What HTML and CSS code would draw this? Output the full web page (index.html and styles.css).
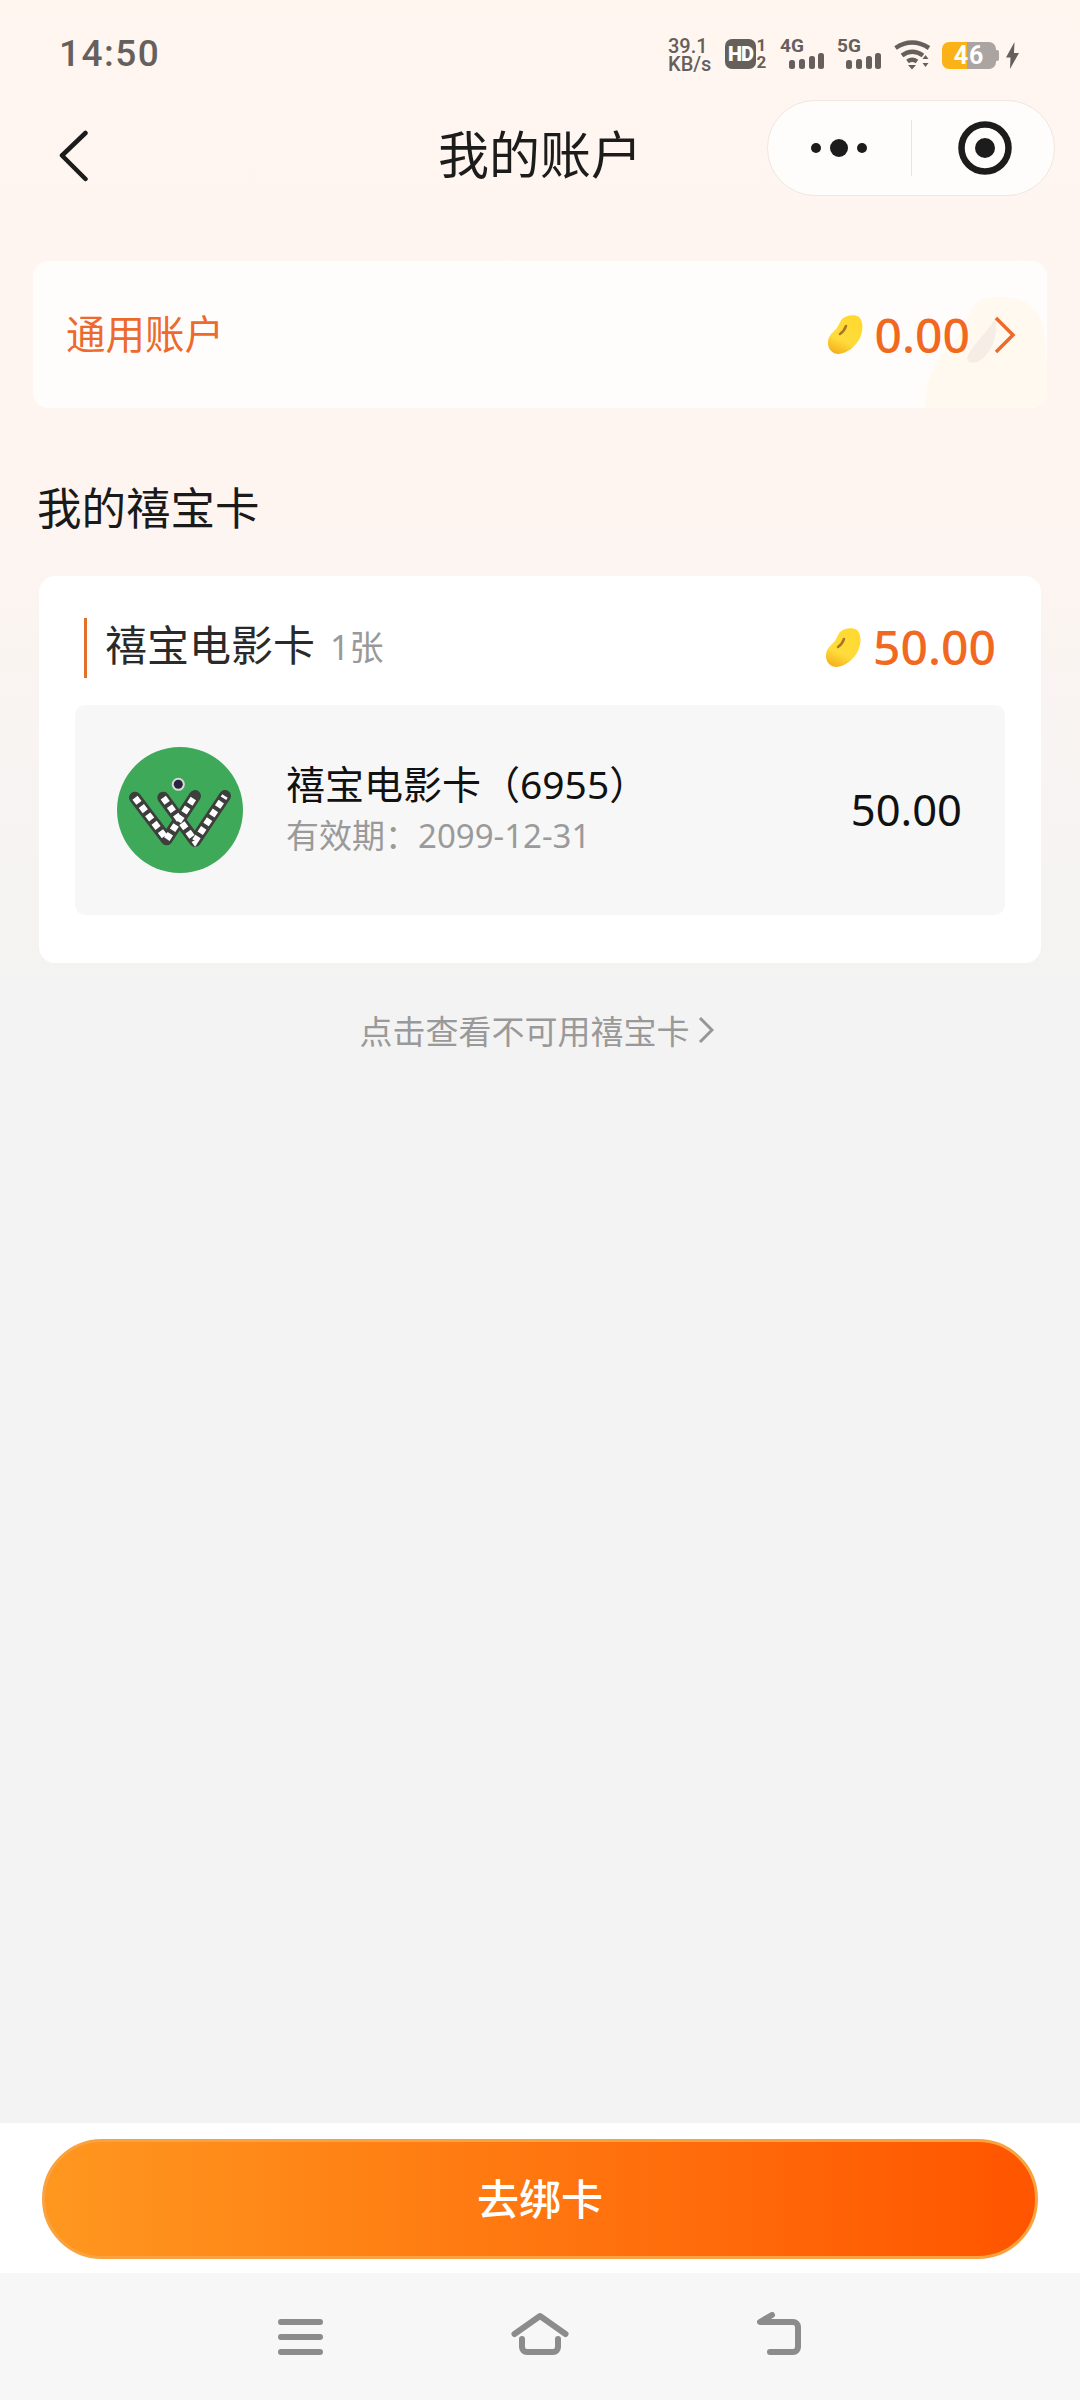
FILE: index.html
```html
<!DOCTYPE html>
<html lang="zh-CN">
<head>
    <meta charset="UTF-8">
    <meta name="viewport" content="width=device-width, initial-scale=1.0">
    <title>我的账户</title>
    <link rel="stylesheet" href="styles.css">
</head>
<body>
    <svg class="defs" width="0" height="0">
        <defs>
            <linearGradient id="beanFill" x1="0.7" y1="0" x2="0.3" y2="1">
                <stop offset="0" stop-color="#ffd92e"/>
                <stop offset="0.65" stop-color="#ffdc3c"/>
                <stop offset="1" stop-color="#f4b31c"/>
            </linearGradient>
            <symbol id="bean" viewBox="0 0 35 39">
                <path d="M14 4C18 0 27-1 31 2c5 5 4 14 1 21-4 8-12 15-21 16C4 39 0 34 0 28c0-6 3-9 6-12 4-3 5-8 8-12z" fill="url(#beanFill)"/>
                <path d="M18 11c-1 3-3 6-6 8" fill="none" stroke="#a8742c" stroke-width="2.500" stroke-linecap="round"/>
            </symbol>
        </defs>
    </svg>

    <div class="page">
        <div class="status-bar">
            <span class="time">14:50</span>
            <div class="status-icons">
                <div class="speed">39.1<br>KB/s</div>
                <div class="hd">
                    <span class="hd-badge">HD</span>
                    <div class="sim"><span>1</span><span>2</span></div>
                </div>
                <div class="signal">
                    <span class="net-label">4G</span>
                    <svg width="35" height="16" viewBox="0 0 35 16">
                        <rect x="0" y="7" width="6" height="9" rx="2.500"/>
                        <rect x="10" y="6" width="6" height="10" rx="2.500"/>
                        <rect x="20" y="3" width="6" height="13" rx="2.500"/>
                        <rect x="29" y="0" width="6" height="16" rx="2.500"/>
                    </svg>
                </div>
                <div class="signal">
                    <span class="net-label">5G</span>
                    <svg width="35" height="16" viewBox="0 0 35 16">
                        <rect x="0" y="7" width="6" height="9" rx="2.500"/>
                        <rect x="10" y="6" width="6" height="10" rx="2.500"/>
                        <rect x="20" y="3" width="6" height="13" rx="2.500"/>
                        <rect x="29" y="0" width="6" height="16" rx="2.500"/>
                    </svg>
                </div>
                <svg class="wifi" width="37" height="30" viewBox="0 0 37 30">
                    <path d="M1.500 8Q18-3 35 8M8 15.500Q18 8 29 15.500M13.500 21.500Q18 18 23 21.500" fill="none" stroke="#65605c" stroke-width="4.500"/>
                    <path d="M14 25h8l-4 4.500zM31.500 15l3 4h-6zM28.500 23h6l-3 4z" fill="#65605c"/>
                </svg>
                <div class="battery">46</div>
                <svg class="bolt" width="13" height="27" viewBox="0 0 13 27">
                    <path d="M8.500 0L0 15.500h4.500L4 27l9-16H8z" fill="#65605c"/>
                </svg>
            </div>
        </div>

        <div class="nav-bar">
            <svg class="back" width="29" height="52" viewBox="0 0 29 52">
                <path d="M26.500 3L3 25.500 26.500 49" fill="none" stroke="#1c1c1c" stroke-width="4.500" stroke-linecap="round" stroke-linejoin="round"/>
            </svg>
            <h1 class="nav-title">我的账户</h1>
            <div class="capsule">
                <div class="capsule-more">
                    <svg width="58" height="20" viewBox="0 0 58 20" fill="#1c1c1c">
                        <circle cx="5" cy="10" r="5"/>
                        <circle cx="28" cy="10" r="9"/>
                        <circle cx="51" cy="10" r="5"/>
                    </svg>
                </div>
                <div class="capsule-line"></div>
                <div class="capsule-close">
                    <svg width="54" height="54" viewBox="0 0 54 54">
                        <circle cx="27" cy="27" r="23.500" fill="none" stroke="#1c1c1c" stroke-width="6.500"/>
                        <circle cx="27" cy="27" r="10" fill="#1c1c1c"/>
                    </svg>
                </div>
            </div>
        </div>

        <main class="content">
            <div class="account-card">
                <svg class="account-deco" width="122" height="111" viewBox="0 0 122 111">
                    <path d="M55 3C75-5 105 0 115 20c8 20 7 60 7 75 0 10-6 16-16 16H0C0 85 8 65 25 50 40 35 42 12 55 3z" fill="#fff9ef"/>
                    <path d="M72 16C68 30 50 45 43 58c-3 7 3 9 9 7 10-5 16-15 18-25 1-8 2-16 2-24z" fill="#f6eee6"/>
                </svg>
                <span class="account-name">通用账户</span>
                <div class="account-value">
                    <svg class="bean" width="35" height="39"><use href="#bean"/></svg>
                    <span class="amount">0.00</span>
                    <svg class="account-arrow" width="22" height="38" viewBox="0 0 22 38">
                        <path d="M2 2L19 19 2 36" fill="none" stroke="#ec6a2c" stroke-width="3.500"/>
                    </svg>
                </div>
            </div>

            <h2 class="section-title">我的禧宝卡</h2>

            <section class="card-group">
                <div class="group-head">
                    <div class="group-name">
                        <span class="group-title">禧宝电影卡</span>
                        <span class="group-count">1张</span>
                    </div>
                    <div class="group-total">
                        <svg class="bean" width="35" height="39"><use href="#bean"/></svg>
                        <span class="amount">50.00</span>
                    </div>
                </div>
                <div class="card-item">
                    <svg class="card-logo" width="126" height="126" viewBox="0 0 126 126">
                        <circle cx="63" cy="63" r="63" fill="#3fa95a"/>
                        <circle cx="61.300" cy="37.300" r="6.500" fill="#d8dcd8"/>
                        <circle cx="61.300" cy="37.300" r="4.500" fill="#2a2440"/>
                        <path d="M18 50.700L49.700 92.300 78 49M46.300 50.700L78 94 108 49" fill="none" stroke="#3d3f3c" stroke-width="12" stroke-linecap="round" stroke-linejoin="round"/>
                        <path d="M18 50.700L49.700 92.300 78 49M46.300 50.700L78 94 108 49" fill="none" stroke="#fff" stroke-width="6.500" stroke-dasharray="6.500 4"/>
                    </svg>
                    <div class="card-info">
                        <div class="card-name">禧宝电影卡（6955）</div>
                        <div class="card-date">有效期：2099-12-31</div>
                    </div>
                    <div class="card-balance">50.00</div>
                </div>
            </section>

            <div class="hint">
                <span>点击查看不可用禧宝卡</span>
                <svg width="16" height="28" viewBox="0 0 16 28">
                    <path d="M2 2L14 14 2 26" fill="none" stroke="#969696" stroke-width="3"/>
                </svg>
            </div>
        </main>

        <div class="footer">
            <button class="bind-btn" type="button"><span>去绑卡</span></button>
        </div>

        <div class="system-nav">
            <svg width="45" height="44" viewBox="0 0 45 44">
                <path d="M3 10H42M3 25H42M3 40H42"/>
            </svg>
            <svg width="58" height="44" viewBox="0 0 58 44">
                <path d="M3.500 22L29 4 54.500 22M11 27V35a5 5 0 0 0 5 5H42a5 5 0 0 0 5-5V27"/>
            </svg>
            <svg width="45" height="44" viewBox="0 0 45 44">
                <path d="M15 3L3 10H36a5 5 0 0 1 5 5V35a5 5 0 0 1-5 5H13"/>
            </svg>
        </div>
    </div>
</body>
</html>
```

FILE: styles.css
```css
* {
    box-sizing: border-box;
}
body {
    margin: 0;
    font-family: "Noto Sans", "Noto Sans CJK SC", sans-serif;
    color: #1c1c1c;
}
.defs {
    display: block;
    height: 0;
}
.page {
    width: 1080px;
    height: 2400px;
    display: flex;
    flex-direction: column;
    background: linear-gradient(#fff6f0 0, #fff5f0 420px, #f3f3f3 1000px);
}

/* status bar */
.status-bar {
    height: 100px;
    display: flex;
    align-items: flex-start;
    justify-content: space-between;
    padding: 37px 61px 0 59px;
    color: #65605c;
}
.time {
    font-family: Roboto, sans-serif;
    font-size: 37px;
    font-weight: 500;
    line-height: 33px;
    letter-spacing: 1.5px;
}
.status-icons {
    display: flex;
    align-items: flex-start;
    gap: 12px;
    font-family: Roboto, sans-serif;
}
.speed {
    width: 45px;
    font-size: 20px;
    font-weight: 500;
    line-height: 18px;
}
.hd {
    width: 42px;
    display: flex;
    align-items: flex-start;
}
.hd-badge {
    width: 31px;
    height: 30px;
    margin-top: 2px;
    border-radius: 7px;
    background: #65605c;
    color: #fff;
    font-size: 20px;
    font-weight: 900;
    line-height: 30px;
    letter-spacing: -1px;
    text-align: center;
}
.sim {
    flex: 1;
    display: flex;
    flex-direction: column;
    align-items: center;
    font-size: 17px;
    font-weight: 700;
    line-height: 17px;
}
.signal {
    width: 44px;
    height: 32px;
    margin-left: 1px;
    display: grid;
}
.signal:first-of-type {
    margin-left: 0;
}
.net-label, .signal svg {
    grid-area: 1 / 1;
}
.net-label {
    font-size: 19px;
    font-weight: 700;
    line-height: 17px;
}
.signal svg {
    justify-self: end;
    align-self: end;
    fill: #65605c;
}
.wifi {
    margin-top: 3px;
    margin-left: 1px;
}
.battery {
    position: relative;
    width: 54px;
    height: 27px;
    margin-top: 5px;
    margin-left: -1px;
    border-radius: 7px;
    background: linear-gradient(90deg, #fbb216 46%, #aaa5a2 46%);
    color: #fff;
    font-size: 25px;
    font-weight: 700;
    line-height: 27px;
    text-align: center;
    letter-spacing: 1px;
}
.battery::after {
    content: "";
    position: absolute;
    right: -3px;
    top: 8px;
    width: 3px;
    height: 11px;
    border-radius: 0 2px 2px 0;
    background: #aaa5a2;
}
.bolt {
    margin-top: 5px;
    margin-left: -2px;
}

/* nav bar */
.nav-bar {
    height: 96px;
    display: grid;
    grid-template-columns: 1fr auto 1fr;
    align-items: center;
    padding: 0 25px;
}
.back {
    margin: 16px 0 0 34px;
}
.nav-title {
    margin: 12px 0 0;
    font-size: 51px;
    font-weight: 400;
    line-height: 60px;
    color: #1c1c1c;
}
.capsule {
    justify-self: end;
    width: 288px;
    height: 96px;
    display: flex;
    align-items: center;
    border: 1px solid #f0e6df;
    border-radius: 48px;
    background: #fffdfb;
}
.capsule-more, .capsule-close {
    display: flex;
    align-items: center;
    justify-content: center;
}
.capsule-more {
    width: 143px;
    padding-left: 1px;
}
.capsule-close {
    flex: 1;
    padding-left: 3px;
}
.capsule-line {
    width: 1px;
    height: 56px;
    background: #ebe5e0;
}

/* content */
.content {
    flex: 1;
    padding: 65px 39px 0;
}
.account-card {
    position: relative;
    height: 147px;
    margin: 0 -6px;
    display: flex;
    align-items: center;
    justify-content: space-between;
    padding: 0 31px 0 33px;
    overflow: hidden;
    border-radius: 16px;
    background: #fffdfb;
}
.account-deco {
    position: absolute;
    right: 0;
    bottom: 0;
}
.account-name {
    position: relative;
    margin-bottom: 6px;
    font-size: 39.500px;
    color: #ec6a2c;
}
.account-value {
    position: relative;
    display: flex;
    align-items: center;
}
.amount {
    margin-left: 12px;
    font-size: 48px;
    font-weight: 500;
    line-height: 60px;
    color: #f0691f;
}
.account-arrow {
    margin-left: 24px;
}
.section-title {
    margin: 70px -2px 38px;
    font-size: 44.500px;
    font-weight: 400;
    line-height: 60px;
    color: #1a1a1a;
}
.card-group {
    height: 387px;
    padding: 42px 36px 48px;
    border-radius: 16px;
    background: #fff;
}
.group-head {
    height: 60px;
    margin: 0 9px 27px 9px;
    display: flex;
    align-items: center;
    justify-content: space-between;
    border-left: 3px solid #e0702c;
}
.group-name {
    display: flex;
    align-items: center;
    padding: 0 0 6px 18px;
}
.group-title {
    font-size: 42px;
    line-height: 56px;
    color: #2a2a2a;
}
.group-count {
    margin-left: 15px;
    font-size: 34px;
    color: #999;
}
.group-total {
    display: flex;
    align-items: center;
    margin-bottom: 2px;
}
.card-item {
    height: 210px;
    display: flex;
    align-items: center;
    padding: 0 43px 0 42px;
    border-radius: 10px;
    background: #f7f7f7;
}
.card-info {
    flex: 1;
    margin-left: 43px;
}
.card-name {
    margin-top: -3px;
    font-size: 39px;
    line-height: 52px;
    color: #111;
}
.card-date {
    margin-top: 3px;
    font-size: 33px;
    line-height: 46px;
    color: #9a9a9a;
}
.card-balance {
    margin-bottom: 2px;
    font-size: 43.500px;
    color: #111;
}
.hint {
    height: 46px;
    margin-top: 44px;
    padding-right: 7px;
    display: flex;
    align-items: center;
    justify-content: center;
    gap: 8px;
    font-size: 33px;
    color: #999;
}

/* bottom */
.footer {
    height: 150px;
    padding: 16px 42px 14px;
    background: #fff;
}
.bind-btn {
    display: block;
    width: 100%;
    height: 120px;
    padding: 0 0 5px;
    border: 3px solid #f8a33f;
    border-radius: 60px;
    background: linear-gradient(90deg, #ff971f, #ff5500);
    color: #fff;
    font-family: inherit;
    font-size: 42px;
    font-weight: 500;
}
.system-nav {
    height: 127px;
    display: flex;
    justify-content: center;
    gap: 188px;
    padding-top: 39px;
    background: #f7f7f7;
}
.system-nav path {
    fill: none;
    stroke: #8c8c8c;
    stroke-width: 6;
    stroke-linecap: round;
    stroke-linejoin: round;
}
```
